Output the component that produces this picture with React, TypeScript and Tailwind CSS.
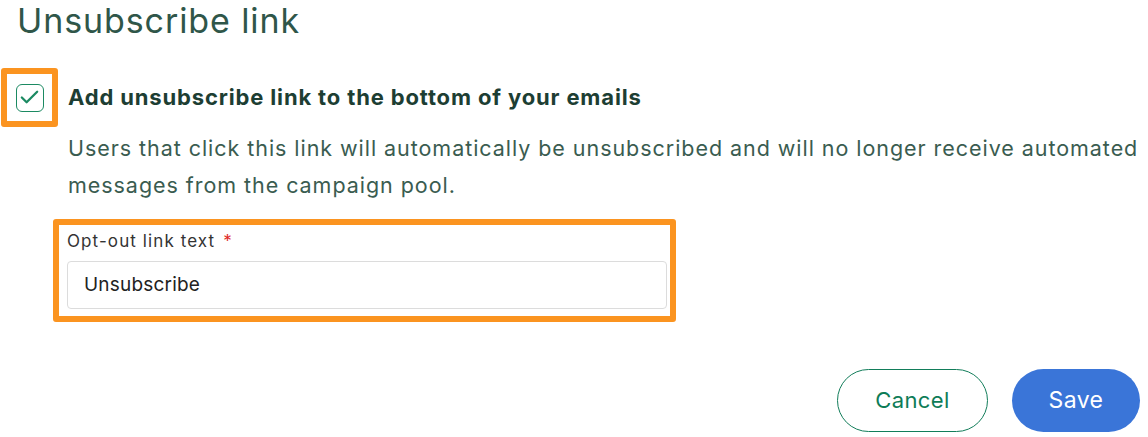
import { Check } from 'lucide-react';

export default function App() {
  return (
    <div className="w-[1148px] h-[437px] bg-white overflow-hidden font-['Inter',sans-serif]">
      {/* 标题 */}
      <h1 className="pl-[17px] pt-[1px] text-[34px] leading-[40px] text-[#2f5649] font-normal tracking-[0.9px]">
        Unsubscribe link
      </h1>

      {/* 复选框行 */}
      <div className="flex mt-[27px]">
        <div className="ml-[1px] w-[57px] h-[59px] border-[6px] border-[#fb9420] rounded-[3px] flex items-center justify-center shrink-0">
          <div className="w-[28px] h-[28px] border border-[#1b8a62] rounded-[6px] flex items-center justify-center">
            <Check className="w-[23px] h-[23px] text-[#1b8a62]" strokeWidth={2.4} />
          </div>
        </div>
        <div className="ml-[10px] pt-[15px]">
          <p className="text-[22px] leading-[28px] font-bold text-[#1d3e33] tracking-[0.85px]">
            Add unsubscribe link to the bottom of your emails
          </p>
        </div>
      </div>

      <div className="pl-[68px] pr-[4px] mt-[3px]">
        <p className="text-[21.5px] leading-[37px] text-[#3a5c50] tracking-[0.95px]">
          Users that click this link will automatically be unsubscribed and will no longer receive automated messages from the campaign pool.
        </p>

        {/* 输入框 */}
        <div className="-ml-[15px] mt-[15px] w-[623px] h-[103px] border-[6px] border-[#fb9420] rounded-[3px] pl-[8px] pr-[3px] pt-[5px]">
          <label className="block text-[17px] leading-[22px] text-[#333] tracking-[1.1px]">
            Opt-out link text <span className="text-[#e02b27] ml-[2px]">*</span>
          </label>
          <div className="mt-[9px] h-[48px] border border-[#dcdcdc] rounded-[4px] flex items-center px-[16px] text-[19px] text-[#222] tracking-[0.2px]">
            Unsubscribe
          </div>
        </div>
      </div>

      {/* 按钮 */}
      <div className="flex justify-end gap-[24px] pr-[8px] mt-[47px]">
        <button className="w-[151px] h-[63px] rounded-full border border-[#127d5a] text-[#0e7c57] text-[22px] tracking-[0.4px] bg-white">
          Cancel
        </button>
        <button className="w-[128px] h-[63px] rounded-full bg-[#3a75d8] text-white text-[23px] tracking-[0.4px]">
          Save
        </button>
      </div>
    </div>
  );
}
